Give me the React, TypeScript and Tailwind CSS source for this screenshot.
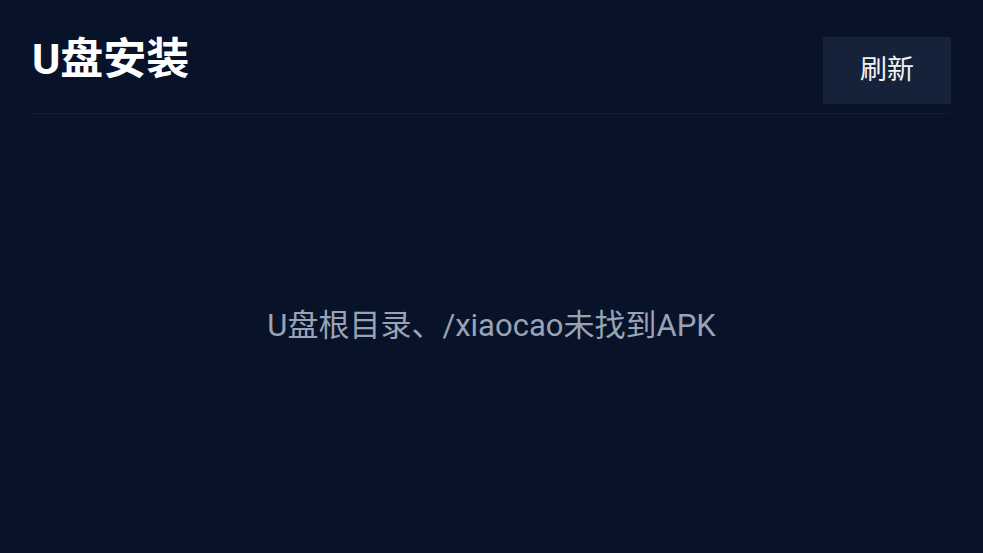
export default function App() {
  return (
    <div
      className="flex h-[553px] w-full flex-col bg-[#08132a] px-8"
      style={{ fontFamily: '"Roboto", "Noto Sans CJK SC", sans-serif' }}
    >
      <header className="flex items-start justify-between border-b border-[#111c31] pt-[37px] pb-[9px]">
        <h1 className="mt-[1px] text-[43px] leading-[43px] font-bold text-white">U盘安装</h1>
        <button className="flex h-[67px] w-[128px] items-center justify-center bg-[#16223a] text-[27px] text-[#f1f3f6]">
          刷新
        </button>
      </header>
      <main className="flex flex-1 items-center justify-center pb-[14px]">
        <p className="text-[31px] text-[#98a3b6]">U盘根目录、/xiaocao未找到APK</p>
      </main>
    </div>
  );
}
